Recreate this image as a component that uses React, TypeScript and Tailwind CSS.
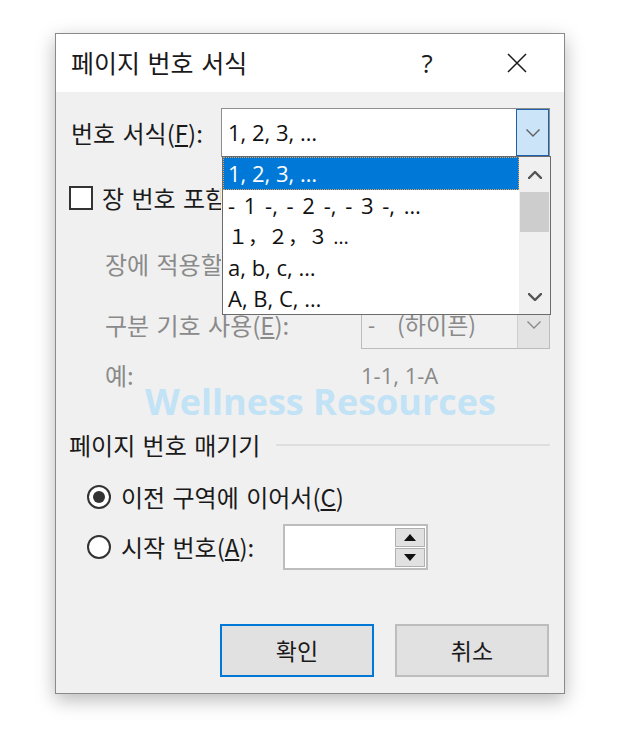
const ko = "[font-family:'Noto_Sans_CJK_KR',sans-serif] [word-spacing:2px]";
const en = "[font-family:'Open_Sans','Noto_Sans_CJK_KR',sans-serif]";

const Chevron = ({ up, color, width = 1.6 }: { up?: boolean; color: string; width?: number }) => (
  <svg width="14" height="8" viewBox="0 0 14 8" fill="none">
    <path
      d={up ? "M1 7 L7 1 L13 7" : "M1 1 L7 7 L13 1"}
      stroke={color}
      strokeWidth={width}
      strokeLinecap="square"
    />
  </svg>
);

const Triangle = ({ up }: { up?: boolean }) => (
  <svg width="12" height="7" viewBox="0 0 12 7">
    <path d={up ? "M0 7 L6 0 L12 7 Z" : "M0 0 L12 0 L6 7 Z"} fill="#111" />
  </svg>
);

const FormatCombo = () => (
  <div className="relative w-[329px] h-[49px] border border-[#8f8f8f] bg-white flex items-center">
    <span className={`${en} text-[22px] text-[#111] pl-[6px]`}>1, 2, 3, …</span>
    <div className="ml-auto w-[33px] h-full border border-[#1e62ad] bg-[#cce4f7] flex items-center justify-center">
      <Chevron color="#5f5f5f" width={1.4} />
    </div>
    {/* open dropdown list */}
    <div className="absolute left-0 top-full z-10 w-[329px] h-[159px] border border-[#6b6b6b] bg-white flex">
      <div className="flex-1 flex flex-col">
        <div className="h-[33px] bg-[#0078d7] border border-dotted border-[#e8a050] flex items-center">
          <span className={`${en} text-[22px] text-white pl-[4px]`}>1, 2, 3, …</span>
        </div>
        <div className="h-[31px] flex items-center">
          <span className={`${en} text-[22px] text-[#111] pl-[5px] whitespace-pre [word-spacing:3px]`}>- 1 -, - 2 -, - 3 -, …</span>
        </div>
        <div className="h-[31px] flex items-center">
          <span className={`${en} text-[20px] text-[#111] pl-[5px] whitespace-pre`}>１，２，３ …</span>
        </div>
        <div className="h-[31px] flex items-center">
          <span className={`${en} text-[22px] text-[#111] pl-[5px]`}>a, b, c, …</span>
        </div>
        <div className="h-[31px] flex items-center">
          <span className={`${en} text-[22px] text-[#111] pl-[5px]`}>A, B, C, …</span>
        </div>
      </div>
      <div className="w-[31px] bg-[#f0f0f0] flex flex-col items-center">
        <div className="h-[35px] flex items-center justify-center">
          <Chevron up color="#555" width={2.4} />
        </div>
        <div className="w-[29px] h-[40px] bg-[#cdcdcd]" />
        <div className="mt-auto h-[35px] flex items-center justify-center">
          <Chevron color="#555" width={2.4} />
        </div>
      </div>
    </div>
  </div>
);

const DisabledCombo = ({ children }: { children?: React.ReactNode }) => (
  <div className="w-[189px] h-[49px] border border-[#bcbcbc] bg-[#f0f0f0] flex items-center">
    <div className={`${en} text-[22px] text-[#8a8a8a] flex-1 flex items-center pl-[6px]`}>{children}</div>
    <div className="w-[32px] h-full border-l border-[#cfcfcf] bg-[#e3e3e3] flex items-center justify-center">
      <Chevron color="#8a8a8a" width={1.4} />
    </div>
  </div>
);

const Radio = ({ checked }: { checked?: boolean }) => (
  <div className="w-[24px] h-[24px] rounded-full border-2 border-[#333] bg-white flex items-center justify-center shrink-0">
    {checked && <div className="w-[12px] h-[12px] rounded-full bg-[#333]" />}
  </div>
);

export default function App() {
  return (
    <div className="w-[620px] h-[741px] bg-white pt-[33px] pl-[55px]">
      <div className="relative w-[510px] h-[661px] border border-[#8a8a8a] bg-[#f0f0f0] shadow-[0_6px_18px_rgba(0,0,0,0.28)] flex flex-col">
        {/* Title bar */}
        <div className="h-[58px] shrink-0 bg-white flex items-center pl-[15px] pr-[24px]">
          <span className={`${ko} text-[25px] text-[#1a1a1a]`}>페이지 번호 서식</span>
          <span className={`${en} ml-auto w-[40px] text-center text-[26px] leading-none text-[#1a1a1a]`}>?</span>
          <div className="ml-[47px] w-[46px] flex justify-center">
            <svg width="20" height="20" viewBox="0 0 20 20">
              <path d="M1 1 L19 19 M19 1 L1 19" stroke="#1a1a1a" strokeWidth="1.5" />
            </svg>
          </div>
        </div>

        {/* Body */}
        <div className="flex-1 flex flex-col pl-[15px] pr-[14px]">
          <div className="mt-[16px] h-[49px] flex items-center">
            <span className={`${ko} w-[150px] text-[24px] text-[#1a1a1a]`}>
              번호 서식(<u>F</u>):
            </span>
            <FormatCombo />
          </div>

          <div className="mt-[26px] h-[30px] flex items-center -ml-[2px]">
            <div className="w-[24px] h-[24px] border-2 border-[#333] bg-white shrink-0" />
            <div className="ml-[9px] w-[119px] overflow-hidden">
              <span className={`${ko} text-[24px] text-[#1a1a1a] whitespace-nowrap`}>
                장 번호 포함(<u>N</u>)
              </span>
            </div>
          </div>

          <div className="mt-[26px] h-[49px] flex items-center pl-[34px]">
            <div className="w-[116px] mr-[140px] overflow-hidden">
              <span className={`${ko} text-[24px] text-[#8a8a8a] whitespace-nowrap`}>
                장에 적용할 스타일(<u>P</u>):
              </span>
            </div>
            <DisabledCombo />
          </div>

          <div className="mt-[12px] h-[49px] flex items-center pl-[34px]">
            <span className={`${ko} w-[256px] text-[24px] text-[#8a8a8a] whitespace-nowrap`}>
              구분 기호 사용(<u>E</u>):
            </span>
            <DisabledCombo>
              <span>-</span>
              <span className={`${ko} ml-[22px] text-[23px]`}>(하이픈)</span>
            </DisabledCombo>
          </div>

          <div className="mt-[11px] h-[30px] flex items-center pl-[34px]">
            <span className={`${ko} w-[256px] text-[24px] text-[#8a8a8a]`}>예:</span>
            <span className={`${en} text-[22px] text-[#8a8a8a]`}>1-1, 1-A</span>
          </div>

          <div className="mt-[40px] h-[30px] flex items-center -ml-[2px]">
            <span className={`${ko} text-[24px] text-[#1a1a1a] whitespace-nowrap`}>페이지 번호 매기기</span>
            <div className="flex-1 ml-[16px] h-[2px] bg-[#dedede]" />
          </div>

          <div className="mt-[22px] h-[30px] flex items-center pl-[16px]">
            <Radio checked />
            <span className={`${ko} ml-[10px] text-[24px] text-[#1a1a1a]`}>
              이전 구역에 이어서(<u>C</u>)
            </span>
          </div>

          <div className="mt-[12px] h-[46px] flex items-center pl-[16px]">
            <Radio />
            <span className={`${ko} ml-[10px] w-[162px] text-[24px] text-[#1a1a1a]`}>
              시작 번호(<u>A</u>):
            </span>
            <div className="w-[145px] h-[46px] border-2 border-[#bdbdbd] bg-white flex justify-end items-center pr-[1px]">
              <div className="w-[30px] flex flex-col gap-[1px]">
                <div className="h-[19px] bg-[#e1e1e1] border border-[#b0b0b0] flex items-center justify-center">
                  <Triangle up />
                </div>
                <div className="h-[19px] bg-[#e1e1e1] border border-[#b0b0b0] flex items-center justify-center">
                  <Triangle />
                </div>
              </div>
            </div>
          </div>

          <div className="mt-[54px] h-[53px] flex justify-end gap-[21px] pr-[1px]">
            <button className={`${ko} w-[154px] h-full border-2 border-[#0078d7] bg-[#e1e1e1] text-[23px] text-[#1a1a1a]`}>
              확인
            </button>
            <button className={`${ko} w-[154px] h-full border-2 border-[#bdbdbd] bg-[#e1e1e1] text-[23px] text-[#1a1a1a]`}>
              취소
            </button>
          </div>
        </div>

        {/* watermark */}
        <div className={`${en} absolute left-[89px] top-[347px] h-[42px] leading-[42px] text-[36px] font-bold text-[#c2e2f6] whitespace-nowrap`}>
          Wellness Resources
        </div>
      </div>
    </div>
  );
}
